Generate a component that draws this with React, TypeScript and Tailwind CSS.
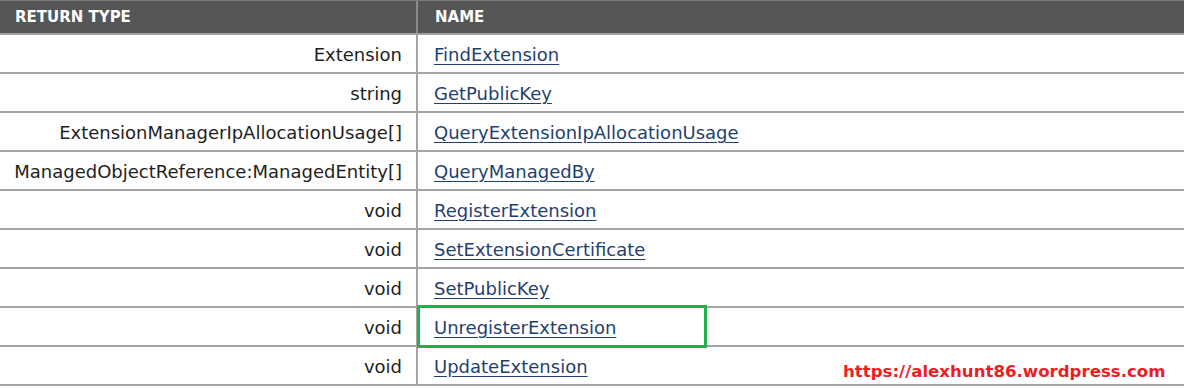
import React from 'react';

const rows: [string, string][] = [
  ['Extension', 'FindExtension'],
  ['string', 'GetPublicKey'],
  ['ExtensionManagerIpAllocationUsage[]', 'QueryExtensionIpAllocationUsage'],
  ['ManagedObjectReference:ManagedEntity[]', 'QueryManagedBy'],
  ['void', 'RegisterExtension'],
  ['void', 'SetExtensionCertificate'],
  ['void', 'SetPublicKey'],
  ['void', 'UnregisterExtension'],
  ['void', 'UpdateExtension'],
];

const App: React.FC = () => {
  return (
    <div className="relative w-[1184px] h-[388px] bg-white overflow-hidden font-['DejaVu_Sans',Verdana,sans-serif]">
      {/* header */}
      <div className="flex h-[35px] bg-[#565656] border-t border-[#7a7a7a] border-b-2 border-b-[#a0a0a0] text-white font-bold text-[15px]">
        <div className="w-[418px] border-r-2 border-[#8a8a8a] flex items-center pl-[15px]">RETURN TYPE</div>
        <div className="flex-1 flex items-center pl-[17px]">NAME</div>
      </div>

      {/* rows */}
      {rows.map(([type, name]) => (
        <div key={name} className="flex h-[39px] border-b-2 border-[#a4a4a4] text-[18px]">
          <div className="w-[418px] border-r-2 border-[#a4a4a4] flex items-center justify-end pr-[14px] pt-[2px] text-[#1e1e1e]">
            {type}
          </div>
          <div className="flex-1 flex items-center pl-[16px] pt-[2px]">
            <a href="#" className="text-[#1f3f6f] underline underline-offset-[3px]">{name}</a>
          </div>
        </div>
      ))}

      {/* highlight box */}
      <div className="absolute left-[417px] top-[305px] w-[290px] h-[43px] border-[3px] border-[#22b14c]" />

      {/* watermark */}
      <div className="absolute left-[843px] top-[360px] text-[#f01c24] font-bold text-[16.6px] font-['DejaVu_Sans',Tahoma,sans-serif]">
        https://alexhunt86.wordpress.com
      </div>
    </div>
  );
};

export default App;
